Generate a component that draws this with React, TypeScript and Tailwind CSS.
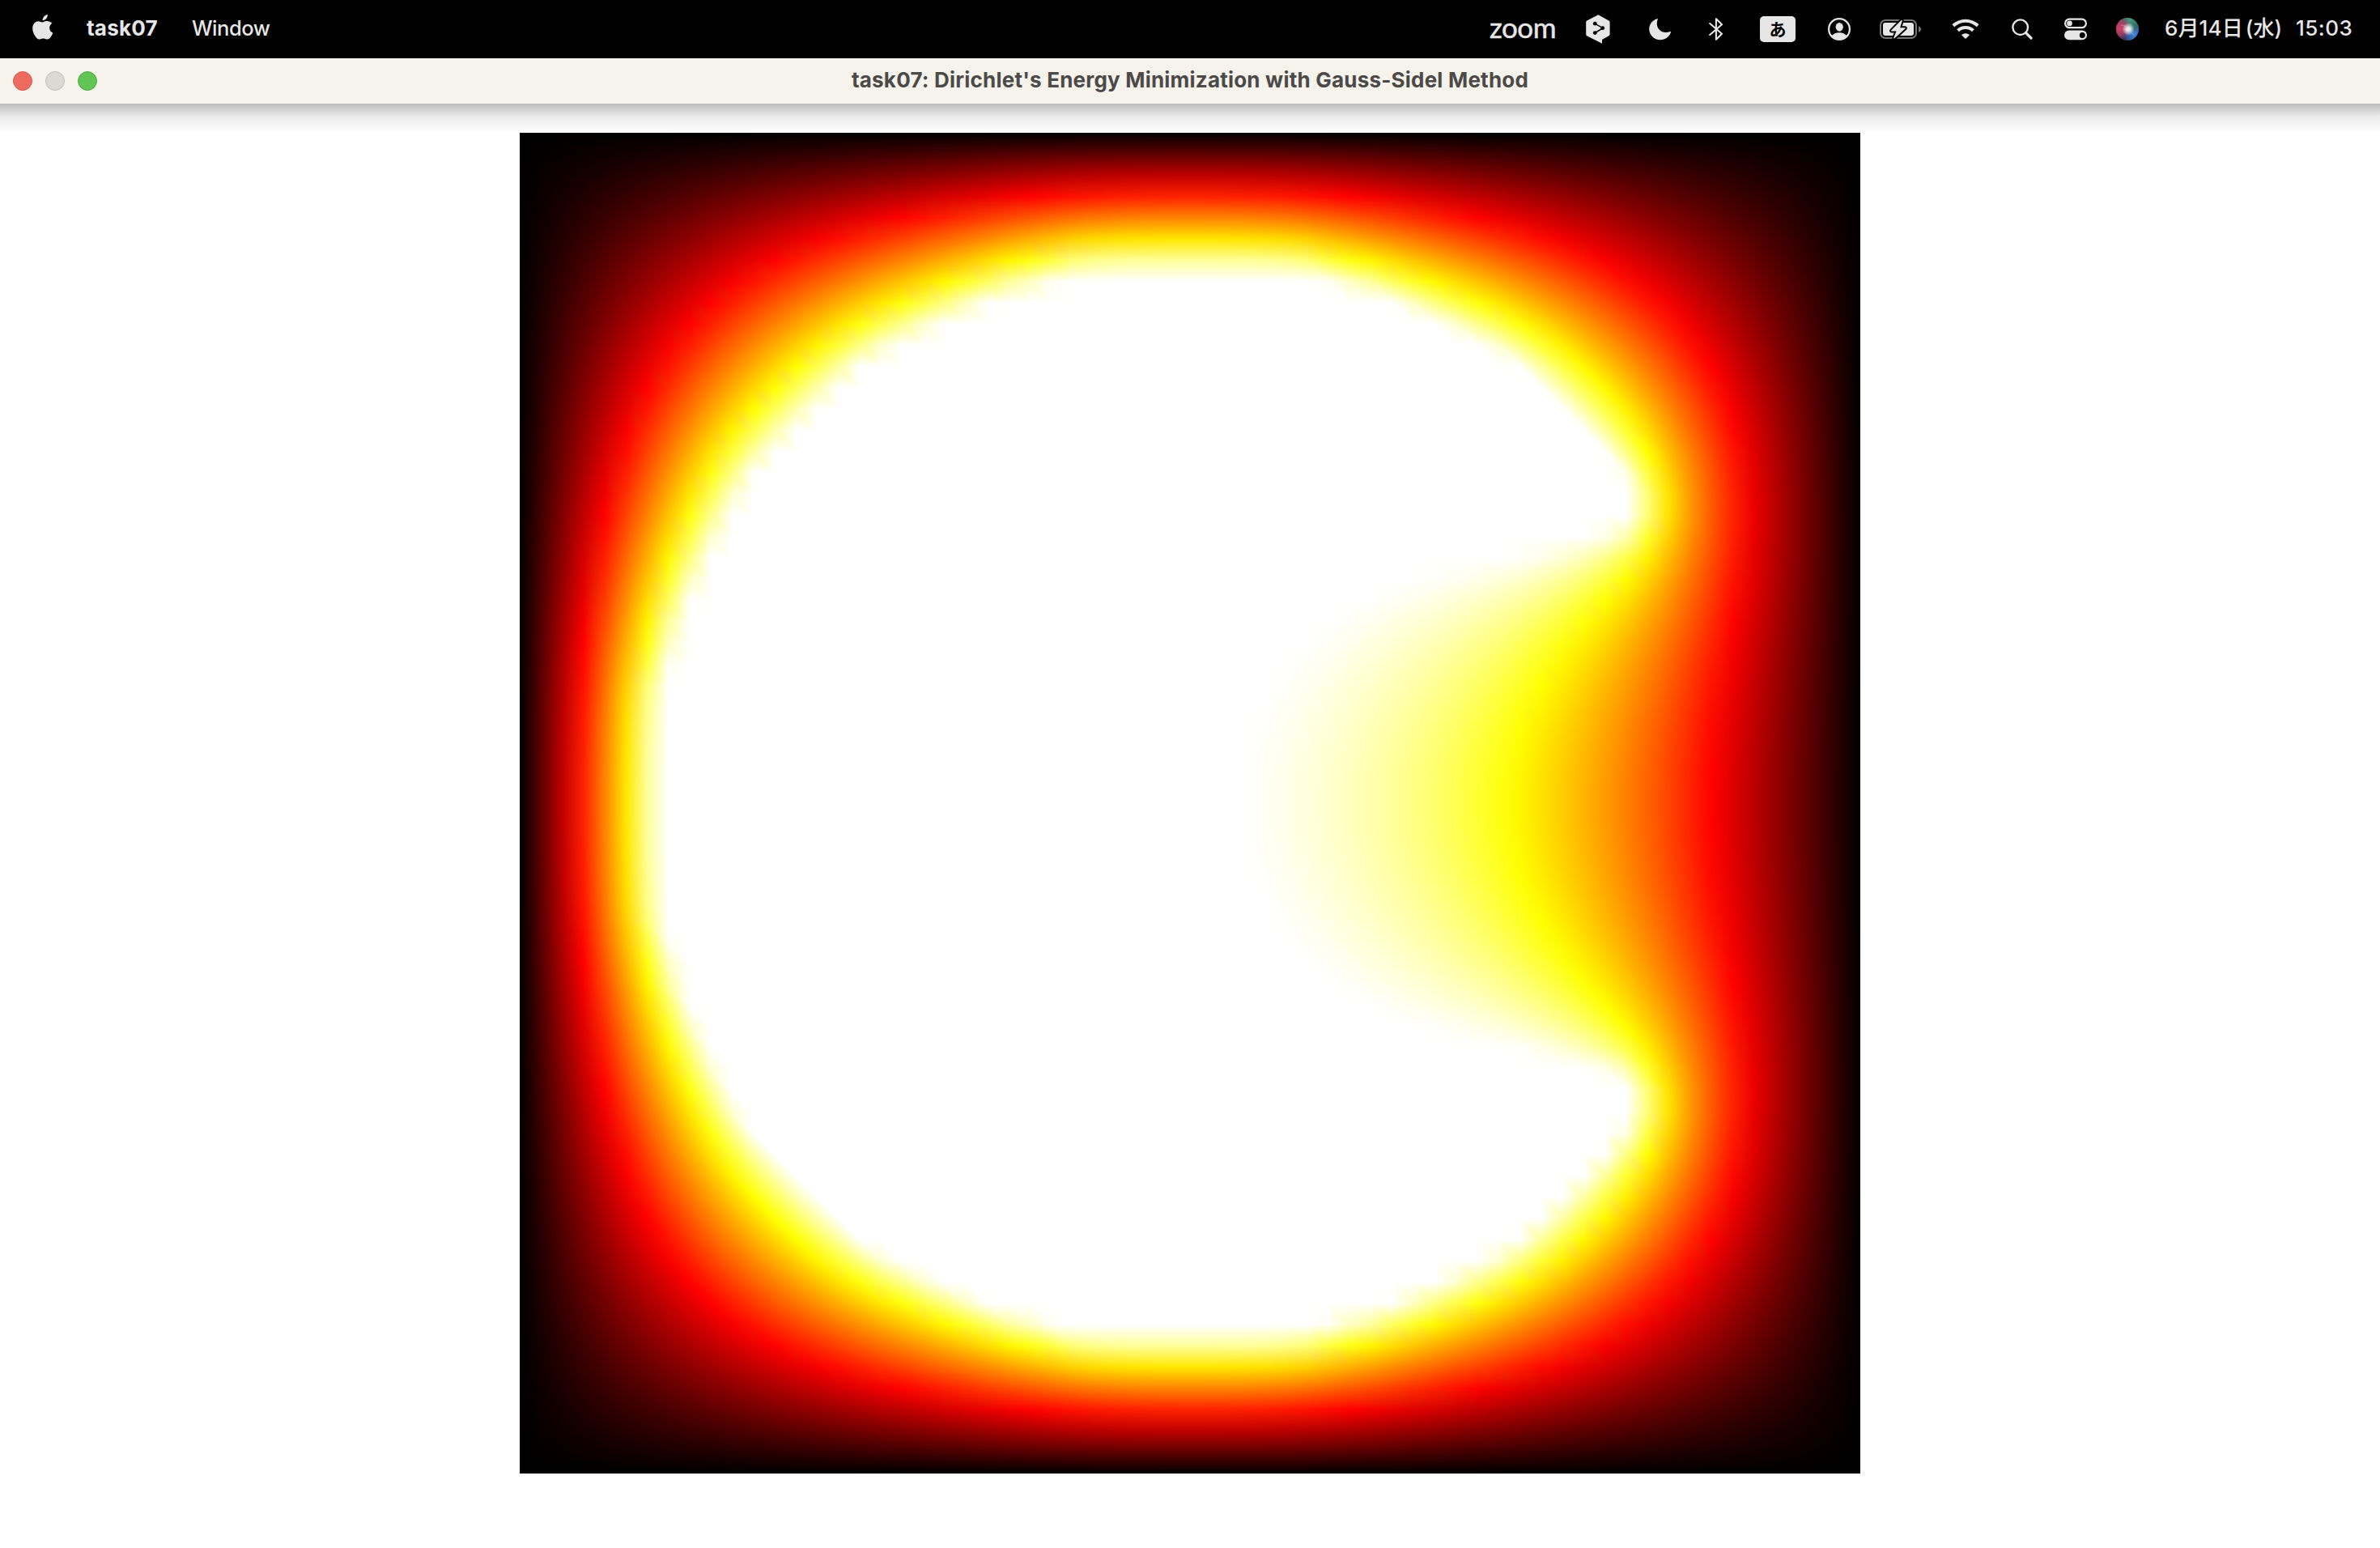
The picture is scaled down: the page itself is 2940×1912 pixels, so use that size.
import React, { useLayoutEffect, useRef } from "react";

const GRID = 64;
const FIELD_SIZE = 1656;

/** Minimises the Dirichlet energy on a square grid with Gauss-Seidel sweeps. */
function solveField(): Float64Array {
  const v = new Float64Array(GRID * GRID);
  const fixed = new Uint8Array(GRID * GRID);
  const span = GRID - 1;
  const c = span / 2;
  for (let y = 0; y < GRID; y++) {
    for (let x = 0; x < GRID; x++) {
      const i = y * GRID + x;
      if (x === 0 || y === 0 || x === GRID - 1 || y === GRID - 1) {
        fixed[i] = 1;
        continue;
      }
      const r = Math.hypot(x - c, y - c) / span;
      const opening = x > c && Math.abs(y - c) / span < 0.2;
      if (r < 0.4 && !opening) v[i] = 1;
      if (r < 0.4 && r > 0.3 && !opening) fixed[i] = 1;
    }
  }
  for (let k = 0; k < 4000; k++) {
    for (let y = 1; y < GRID - 1; y++) {
      for (let x = 1; x < GRID - 1; x++) {
        const i = y * GRID + x;
        if (!fixed[i]) v[i] = (v[i - 1] + v[i + 1] + v[i - GRID] + v[i + GRID]) / 4;
      }
    }
  }
  return v;
}

const clamp = (t: number) => Math.max(0, Math.min(1, t));

function heat(v: number): [number, number, number] {
  return [clamp(v / 0.375), clamp((v - 0.375) / 0.367), clamp((v - 0.742) / 0.183)];
}

function HeatField() {
  const ref = useRef<HTMLCanvasElement>(null);
  useLayoutEffect(() => {
    const ctx = ref.current?.getContext("2d");
    if (!ctx) return;
    const colors = Array.from(solveField(), heat);
    const img = ctx.createImageData(FIELD_SIZE, FIELD_SIZE);
    const cell = FIELD_SIZE / (GRID - 1);
    for (let py = 0; py < FIELD_SIZE; py++) {
      const gy = (py + 0.5) / cell;
      const iy = Math.floor(gy);
      const w = gy - iy;
      for (let px = 0; px < FIELD_SIZE; px++) {
        const gx = (px + 0.5) / cell;
        const ix = Math.floor(gx);
        const u = gx - ix;
        const tl = colors[iy * GRID + ix];
        const tr = colors[iy * GRID + ix + 1];
        const bl = colors[(iy + 1) * GRID + ix];
        const br = colors[(iy + 1) * GRID + ix + 1];
        const o = (py * FIELD_SIZE + px) * 4;
        for (let k = 0; k < 3; k++) {
          const val =
            u > w
              ? tl[k] + (tr[k] - tl[k]) * u + (br[k] - tr[k]) * w
              : tl[k] + (bl[k] - tl[k]) * w + (br[k] - bl[k]) * u;
          img.data[o + k] = Math.round(val * 255);
        }
        img.data[o + 3] = 255;
      }
    }
    ctx.putImageData(img, 0, 0);
  }, []);
  return <canvas ref={ref} width={FIELD_SIZE} height={FIELD_SIZE} className="block h-[1656px] w-[1656px] bg-black" />;
}

function AppleIcon() {
  return (
    <svg className="ml-[40px] h-[32px] w-[26px] shrink-0" viewBox="0 0 26 32" fill="currentColor">
      <path d="M18.8 0c.2 1.900-.6 3.700-1.700 5-1.200 1.400-2.900 2.300-4.500 2.200-.2-1.800.7-3.600 1.700-4.800C15.500 1 17.300.1 18.800 0z" />
      <path d="M24.500 10.800c-.2.100-3.300 1.900-3.300 5.700 0 4.500 3.900 6 4.100 6.100 0 .1-.6 2.200-2.100 4.300-1.300 1.800-2.600 3.700-4.700 3.700s-2.600-1.200-5-1.200c-2.300 0-3.200 1.200-5.100 1.200-2 0-3.400-1.700-4.800-3.800C1.700 24.200.2 20.400.2 16.900c0-5.700 3.700-8.700 7.300-8.700 1.900 0 3.500 1.300 4.700 1.300 1.200 0 3-1.400 5.200-1.400.9 0 4.300.2 7.100 2.700z" />
    </svg>
  );
}

function HexShareIcon() {
  return (
    <svg className="ml-[39px] h-[36px] w-[30px] shrink-0" viewBox="0 0 30 36">
      <path
        d="M15.300 0.200 28.400 7.500Q29.600 8.200 29.600 9.500V24.200Q29.600 25.500 28.400 26.200L20 31V35.700L1.200 26.200Q0.200 25.500 0.200 24.200V9.500Q0.200 8.200 1.300 7.500Z"
        fill="#e6e6e6"
      />
      <path d="M11.500 11.300 21 16.700 11.500 22.500" stroke="#000" strokeWidth="1.500" fill="none" />
      <circle cx="11.300" cy="11.200" r="2.400" fill="#000" />
      <circle cx="20.700" cy="16.700" r="2.400" fill="#000" />
      <circle cx="11.300" cy="22.600" r="2.400" fill="#000" />
    </svg>
  );
}

function MoonIcon() {
  return (
    <svg className="ml-[48px] h-[28px] w-[28px] shrink-0" viewBox="0 0 28 28" fill="currentColor">
      <path d="M9.800 1.200C10.500.9 11 1.300 10.700 2 10.100 3.500 9.800 5.200 9.800 7c0 6.300 4.700 11 11 11 1.800 0 3.600-.4 5-.9.800-.3 1.400.2 1.100 1C25.100 23.700 20 27.300 14 27.300 6.300 27.300.2 21.300.2 13.800.2 8 4.200 3 9.800 1.200z" />
    </svg>
  );
}

function BluetoothIcon() {
  return (
    <svg className="ml-[46px] h-[30px] w-[18px] shrink-0" viewBox="0 0 18 30" fill="none">
      <path
        d="M1.200 8 16 20.800 8.900 27.800V2.200L16 9.200 1.200 22"
        stroke="currentColor"
        strokeWidth="2.100"
        strokeLinecap="round"
        strokeLinejoin="round"
      />
    </svg>
  );
}

function AccountIcon() {
  return (
    <svg className="ml-[40px] h-[28px] w-[28px] shrink-0" viewBox="0 0 28 28">
      <circle cx="14" cy="14" r="12.900" fill="none" stroke="#e6e6e6" strokeWidth="2.200" />
      <ellipse cx="14.200" cy="11.300" rx="4.600" ry="5.400" fill="#e6e6e6" />
      <path d="M4.500 22.600C6.500 19.700 10 18.200 14 18.200s7.500 1.500 9.500 4.400C21.200 25.500 17.700 27 14 27S6.800 25.500 4.500 22.600z" fill="#e6e6e6" />
    </svg>
  );
}

function BatteryIcon() {
  const bolt =
    "M26.800 0.800 14.200 13.600Q13.600 14.400 14.600 14.400H20.600L17.400 22.600Q17.200 24 18.400 23.200L31.600 11.200Q32.200 10.200 31.200 10.200H25.200L27.600 2Q27.800 0.300 26.800 0.800Z";
  return (
    <svg className="ml-[36px] h-[24px] w-[52px] shrink-0 overflow-visible" viewBox="0 0 52 24">
      <rect x="1" y="1" width="44" height="22" rx="6" fill="none" stroke="#767676" strokeWidth="2" />
      <path d="M48 8.200c1.800.7 3 2.200 3 3.800s-1.200 3.100-3 3.800z" fill="#767676" />
      <rect x="4" y="4" width="38" height="16" rx="3" fill="#e6e6e6" />
      <path d={bolt} fill="#e6e6e6" stroke="#000" strokeWidth="4" strokeLinejoin="round" />
      <path d={bolt} fill="#e6e6e6" />
    </svg>
  );
}

function WifiIcon() {
  return (
    <svg className="ml-[37px] h-[26px] w-[34px] shrink-0" viewBox="0 0 34 26" fill="none">
      <path d="M1.800 8.800A21.800 21.800 0 0 1 32.200 8.800" stroke="#e6e6e6" strokeWidth="4" />
      <path d="M7.600 14.800A13.500 13.500 0 0 1 26.400 14.800" stroke="#e6e6e6" strokeWidth="4" />
      <path d="M17 25 12 20.300A7 7 0 0 1 22 20.300z" fill="#e6e6e6" />
    </svg>
  );
}

function SearchIcon() {
  return (
    <svg className="ml-[40px] h-[26px] w-[26px] shrink-0" viewBox="0 0 26 26" fill="none" stroke="currentColor">
      <circle cx="10.700" cy="10.700" r="9.300" strokeWidth="2.400" />
      <path d="M17.600 17.600 24 24" strokeWidth="3.200" strokeLinecap="round" />
    </svg>
  );
}

function ControlCenterIcon() {
  return (
    <svg className="ml-[39px] h-[28px] w-[28px] shrink-0" viewBox="0 0 28 28">
      <rect x="1.100" y="1.600" width="25.800" height="10.600" rx="5.300" fill="none" stroke="#e6e6e6" strokeWidth="2.200" />
      <circle cx="6.500" cy="6.900" r="3.300" fill="#e6e6e6" />
      <rect x="0" y="15.500" width="28" height="11.800" rx="5.900" fill="#e6e6e6" />
      <circle cx="22.300" cy="21.400" r="3.500" fill="#000" />
    </svg>
  );
}

function SiriIcon() {
  return (
    <svg className="ml-[36px] h-[28px] w-[28px] shrink-0" viewBox="0 0 28 28">
      <defs>
        <radialGradient id="siriCore" cx="0.540" cy="0.500" r="0.280">
          <stop offset="0" stopColor="#fff" />
          <stop offset="0.350" stopColor="#f2f4fa" stopOpacity="0.850" />
          <stop offset="1" stopColor="#fff" stopOpacity="0" />
        </radialGradient>
        <radialGradient id="siriPink" cx="0.150" cy="0.450" r="0.500">
          <stop offset="0" stopColor="#d8406c" />
          <stop offset="0.600" stopColor="#b43c64" stopOpacity="0.800" />
          <stop offset="1" stopColor="#b43c64" stopOpacity="0" />
        </radialGradient>
        <radialGradient id="siriBlue" cx="0.800" cy="0.700" r="0.550">
          <stop offset="0" stopColor="#3f8ae0" />
          <stop offset="0.600" stopColor="#2f62a8" stopOpacity="0.850" />
          <stop offset="1" stopColor="#27427a" stopOpacity="0" />
        </radialGradient>
        <radialGradient id="siriGreen" cx="0.620" cy="0.080" r="0.600">
          <stop offset="0" stopColor="#4a9c80" />
          <stop offset="0.700" stopColor="#2f6e5e" stopOpacity="0.800" />
          <stop offset="1" stopColor="#2f6e5e" stopOpacity="0" />
        </radialGradient>
      </defs>
      <circle cx="14" cy="14" r="14" fill="#3a3450" />
      <circle cx="14" cy="14" r="14" fill="url(#siriBlue)" />
      <circle cx="14" cy="14" r="14" fill="url(#siriGreen)" />
      <circle cx="14" cy="14" r="14" fill="url(#siriPink)" />
      <circle cx="14" cy="14" r="14" fill="url(#siriCore)" />
      <path d="M6 9c5 0 8 3 16 13" stroke="#e9b8cc" strokeOpacity="0.500" fill="none" />
    </svg>
  );
}

function MenuBar() {
  return (
    <header className="flex h-[72px] w-full items-center bg-black text-[26px] leading-none whitespace-nowrap text-[#e6e6e6]">
      <div className="mt-[-4px]">
        <AppleIcon />
      </div>
      <span className="mt-[-2px] ml-[41px] w-[88px] font-bold tracking-[0.2px]">task07</span>
      <span className="mt-[-2px] ml-[42px] w-[96px] text-[25.500px] font-medium tracking-[-0.450px]">Window</span>
      <div className="ml-auto flex h-full items-center pr-[32px]">
        <span className="mt-[-6px] w-[80px] font-['Lato'] text-[35px] tracking-[-0.500px] [-webkit-text-stroke:0.5px_#e6e6e6]">
          zoom
        </span>
        <HexShareIcon />
        <MoonIcon />
        <BluetoothIcon />
        <span className="ml-[45px] flex h-[32px] w-[44px] items-center justify-center rounded-[5px] bg-[#e6e6e6] pb-[1px] font-['Noto_Sans_CJK_JP'] text-[21px] font-bold text-black">
          あ
        </span>
        <AccountIcon />
        <BatteryIcon />
        <WifiIcon />
        <SearchIcon />
        <ControlCenterIcon />
        <SiriIcon />
        <span className="mt-[-2px] ml-[32px] w-[146px] font-medium tracking-[0.100px] [word-spacing:-4px]">6月14日 (水)</span>
        <span className="mt-[-2px] ml-[16px] w-[72px] font-medium tracking-[0.500px]">15:03</span>
      </div>
    </header>
  );
}

function TitleBar() {
  return (
    <div className="grid h-[56px] w-full grid-cols-[1fr_auto_1fr] items-center bg-[#f6f2ec]">
      <div className="flex gap-[16px] pl-[16px]">
        <span className="size-[24px] rounded-full border border-[#d8574b] bg-[#ed6b5f]" />
        <span className="size-[24px] rounded-full border border-[#c3bfb9] bg-[#dcd9d4]" />
        <span className="size-[24px] rounded-full border border-[#50ab41] bg-[#61c555]" />
      </div>
      <h1 className="mt-[-2px] text-[26px] leading-none font-bold tracking-[0.210px] whitespace-nowrap text-[#4b4a48]">
        task07: Dirichlet's Energy Minimization with Gauss-Sidel Method
      </h1>
      <span />
    </div>
  );
}

export default function App() {
  return (
    <div className="flex h-[1912px] w-[2940px] flex-col overflow-hidden bg-white font-['Inter','Noto_Sans_CJK_JP',sans-serif]">
      <MenuBar />
      <TitleBar />
      <div className="h-[36px] w-full bg-linear-to-b from-[#bdbdbd] via-[#ebebeb] via-45% to-white" />
      <main className="flex justify-center">
        <HeatField />
      </main>
    </div>
  );
}
